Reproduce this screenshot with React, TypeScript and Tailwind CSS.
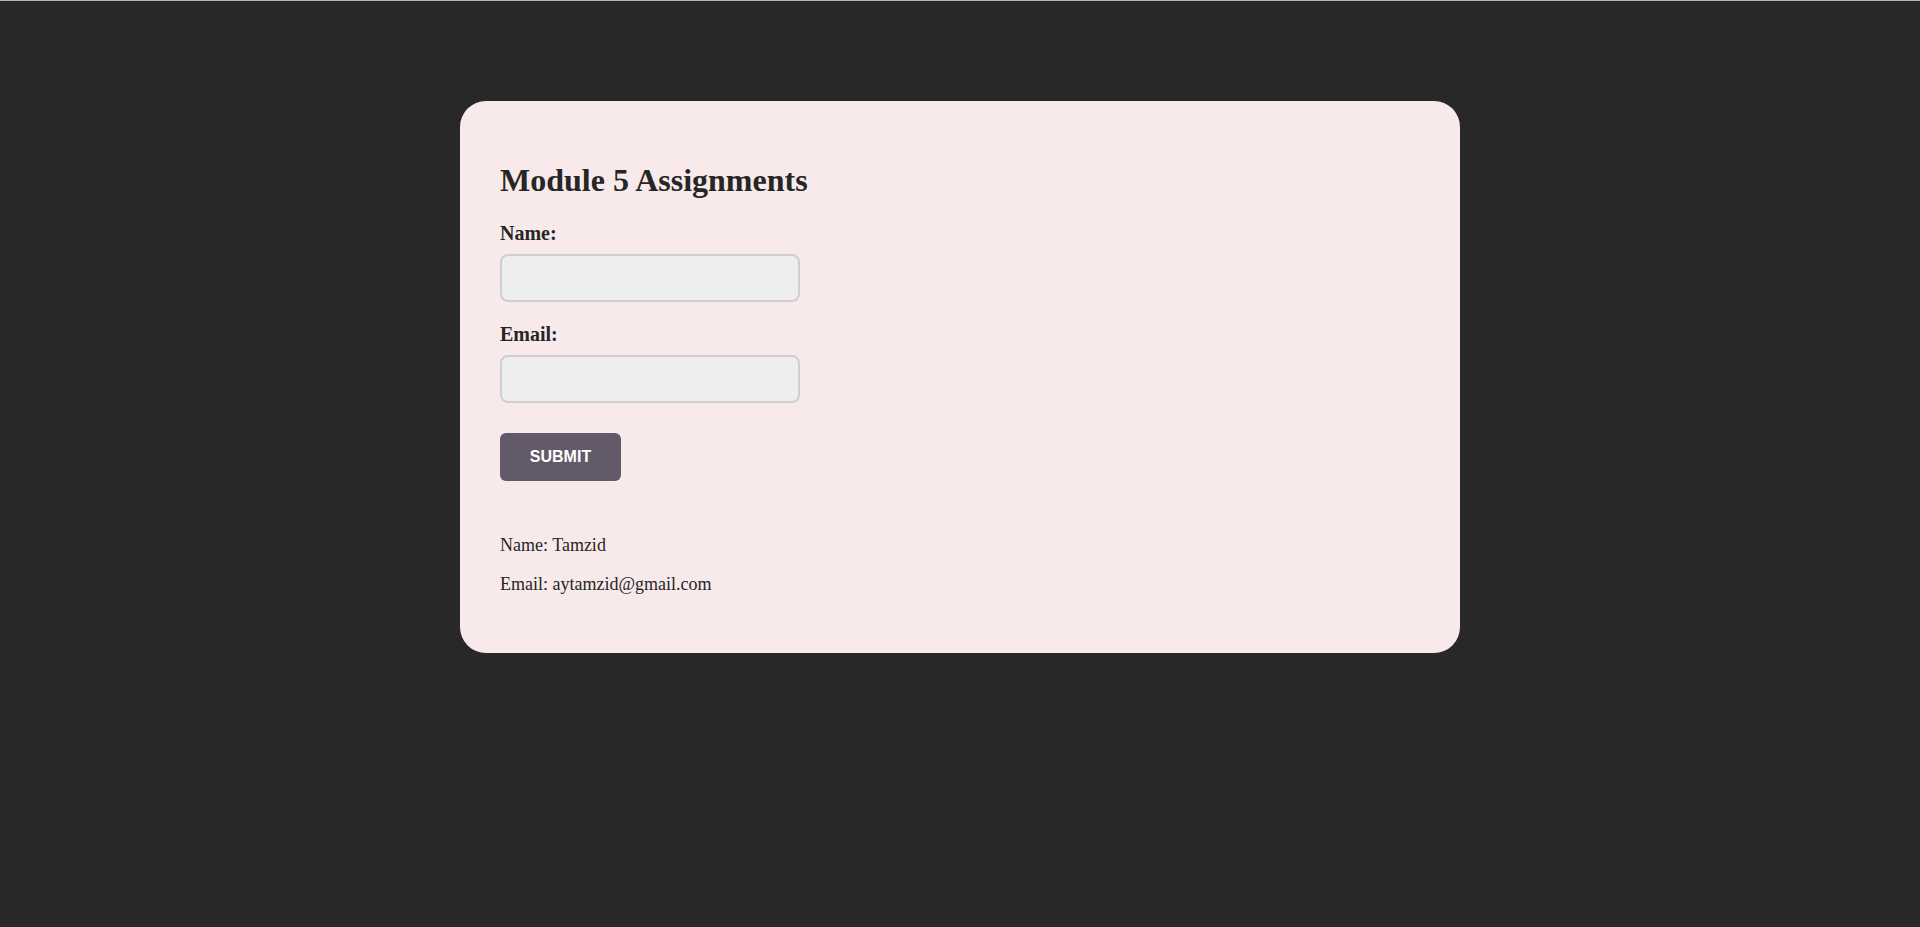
import { useState } from 'react'

const serif = "font-['Liberation_Serif','Times_New_Roman',serif]"

export default function App() {
    const [name, setName] = useState('')
    const [email, setEmail] = useState('')
    const [shown, setShown] = useState({
        name: 'Tamzid',
        email: 'aytamzid@gmail.com',
    })

    const handleSubmit = (e: React.FormEvent) => {
        e.preventDefault()
        setShown({ name, email })
    }

    return (
        <div
            className={`min-h-[927px] bg-[#282829] border-t border-[#b4b4b4] ${serif} text-[#262626]`}
        >
            <div className="flex justify-center pt-[100px]">
                <div className="w-[1000px] h-[552px] bg-[#f8eaea] rounded-[26px] px-10 pt-[59px]">
                    <h2 className="text-[32px] leading-[40px] font-bold">
                        Module 5 Assignments
                    </h2>
                    <form onSubmit={handleSubmit} className="flex flex-col">
                        <label
                            htmlFor="name"
                            className="mt-[21px] text-[20px] leading-[24px] font-bold"
                        >
                            Name:
                        </label>
                        <input
                            id="name"
                            value={name}
                            onChange={e => setName(e.target.value)}
                            className="mt-[9px] w-[300px] h-[48px] bg-[#eeeeee] border-2 border-[#cfcfcf] rounded-lg px-3 outline-none"
                        />
                        <label
                            htmlFor="email"
                            className="mt-[20px] text-[20px] leading-[24px] font-bold"
                        >
                            Email:
                        </label>
                        <input
                            id="email"
                            value={email}
                            onChange={e => setEmail(e.target.value)}
                            className="mt-[9px] w-[300px] h-[48px] bg-[#eeeeee] border-2 border-[#cfcfcf] rounded-lg px-3 outline-none"
                        />
                        <div className="mt-[30px]">
                            <button
                                type="submit"
                                className="h-[48px] w-[121px] bg-[#625a68] rounded-md text-white text-[16px] font-bold font-['Liberation_Sans',Arial,sans-serif]"
                            >
                                SUBMIT
                            </button>
                        </div>
                    </form>
                    <p className="mt-[52px] text-[18px] leading-[24px]">
                        Name: {shown.name}
                    </p>
                    <p className="mt-[15px] text-[18px] leading-[24px]">
                        Email: {shown.email}
                    </p>
                </div>
            </div>
        </div>
    )
}
